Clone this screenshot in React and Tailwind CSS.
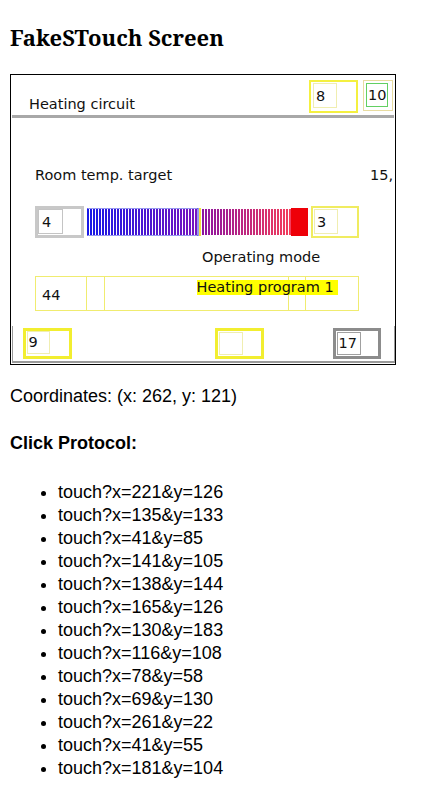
const clicks = [
  'touch?x=221&y=126',
  'touch?x=135&y=133',
  'touch?x=41&y=85',
  'touch?x=141&y=105',
  'touch?x=138&y=144',
  'touch?x=165&y=126',
  'touch?x=130&y=183',
  'touch?x=116&y=108',
  'touch?x=78&y=58',
  'touch?x=69&y=130',
  'touch?x=261&y=22',
  'touch?x=41&y=55',
  'touch?x=181&y=104',
];

const mix = (a, b, t) => {
  const c = a.map((v, i) => Math.round(v + (b[i] - v) * t));
  return `rgb(${c[0]},${c[1]},${c[2]})`;
};

// the slider bar drawn on the device screen
const Bar = () => {
  const blue = [];
  for (let x = 0; x < 111; x += 3) {
    blue.push(<rect key={'b' + x} x={x} y={1} width={2} height={26} fill={mix([24, 24, 230], [120, 20, 190], x / 111)} />);
  }
  const red = [];
  for (let x = 115; x < 203; x += 3) {
    red.push(<rect key={'r' + x} x={x} y={1} width={2} height={26} fill={mix([140, 20, 160], [245, 60, 90], (x - 115) / 88)} />);
  }
  return (
    <svg width="221" height="28" viewBox="0 0 221 28" className="shrink-0">
      <rect x="0" y="0" width="111" height="28" fill="#ffffff" stroke="#3030e0" strokeWidth="1" />
      {blue}
      <rect x="112" y="0" width="2" height="28" fill="#f0e040" />
      {red}
      <rect x="204" y="0" width="17" height="28" fill="#ee0008" />
    </svg>
  );
};

// outer frame + inner field, as the touch screen draws its widgets
const Field = ({ outer, inner, children }) => (
  <div className={'flex shrink-0 ' + outer}>
    <div className={'flex items-center ' + inner}>{children}</div>
  </div>
);

const Screen = () => {
  return (
    <div className="flex flex-col w-[386px] h-[291px] border border-black overflow-hidden bg-white text-[14.5px] leading-[18px] text-[#111]" style={{ fontFamily: '"DejaVu Sans", sans-serif' }}>
      <div className="flex items-start h-[40px] pr-[2px]">
        <div className="ml-[18px] mt-[20px]">Heating circuit</div>
        <Field outer="ml-auto mt-[5px] w-[49px] h-[33px] border-2 border-[#f4f040] pl-[2px] pt-[1px]" inner="w-[24px] h-[25px] border border-[#f0eeb0] pl-[2px]">
          8
        </Field>
        <Field outer="ml-[5px] mt-[5px] w-[30px] h-[31px] border border-[#e8dca0] pl-[2px] pt-[2px]" inner="w-[22px] h-[24px] border-[1.5px] border-[#62d062] pl-[1px]">
          10
        </Field>
      </div>
      <div className="mx-[1px] h-[3px] bg-[#a8a8a8]" />

      <div className="flex justify-between mt-[48px] pl-[24px] pr-[2px]">
        <span>Room temp. target</span>
        <span>15,</span>
      </div>

      <div className="flex items-center gap-[3px] mt-[22px] pl-[24px]">
        <Field outer="w-[49px] h-[32px] border-[3px] border-[#c8c8c8]" inner="w-[25px] h-[25px] border border-[#c4c4c4] pl-[3px]">
          4
        </Field>
        <Bar />
        <Field outer="w-[48px] h-[32px] border-2 border-[#f0ec60] pl-[1px] pt-[1px]" inner="w-[24px] h-[25px] border border-[#f0eeb0] pl-[2px]">
          3
        </Field>
      </div>

      <div className="mt-[10px] pl-[191px]">Operating mode</div>

      <div className="relative flex mt-[10px] ml-[24px] w-[324px] h-[35px] border-[1.5px] border-[#f0ec70]">
        <div className="w-[51px] border-r-[1.5px] border-[#f0ec70] pl-[6px] pt-[8.5px]">44</div>
        <div className="w-[18px] border-r-[1.5px] border-[#f0ec70]" />
        <div className="w-[184px] border-r-[1.5px] border-[#f0ec70]" />
        <div className="w-[17px] border-r-[1.5px] border-[#f0ec70]" />
        <div className="absolute left-[160.5px] top-[2.5px] w-[141px] h-[15px] leading-[15px] bg-[#ffff00]">Heating program 1</div>
      </div>

      <div className="flex mt-[15px] ml-[1px] w-[383px] h-[37px] border-x-[1.5px] border-b-2 border-[#9a9a9a] pt-[1.5px] pl-[9.5px]">
        <Field outer="w-[49px] h-[31px] border-[3px] border-[#f2ee30] pl-[1px]" inner="w-[23px] h-[23px] border border-[#f0eeb0] pl-[1px]">
          9
        </Field>
        <Field outer="ml-[143px] w-[49px] h-[31px] border-[3px] border-[#f2ee30] pl-[1px] pt-[1px]" inner="w-[24px] h-[23px] border border-[#f0eeb0]" />
        <Field outer="ml-[69px] w-[48px] h-[31px] border-[3px] border-[#8c8c8c] pl-[1px] pt-[1px]" inner="w-[24px] h-[23px] border border-[#a0a0a0] pl-[1px]">
          17
        </Field>
      </div>
    </div>
  );
};

export default function App() {
  return (
    <div className="px-[10px] pb-8 bg-white text-black" style={{ fontFamily: '"Liberation Sans", Arial, sans-serif' }}>
      <h2 className="pt-[22px] text-[22px] leading-[30px] font-bold" style={{ fontFamily: '"Noto Serif", "DejaVu Serif", serif' }}>
        FakeSTouch Screen
      </h2>
      <div className="mt-[22px]">
        <Screen />
      </div>
      <p className="mt-[20px] text-[18px] leading-[23px]">Coordinates: (x: 262, y: 121)</p>
      <p className="mt-[24px] text-[18px] leading-[23px] font-bold">Click Protocol:</p>
      <ul className="mt-[26px] list-disc pl-[48px] text-[18px] leading-[23px]">
        {clicks.map((c, i) => (
          <li key={i}>{c}</li>
        ))}
      </ul>
    </div>
  );
}
